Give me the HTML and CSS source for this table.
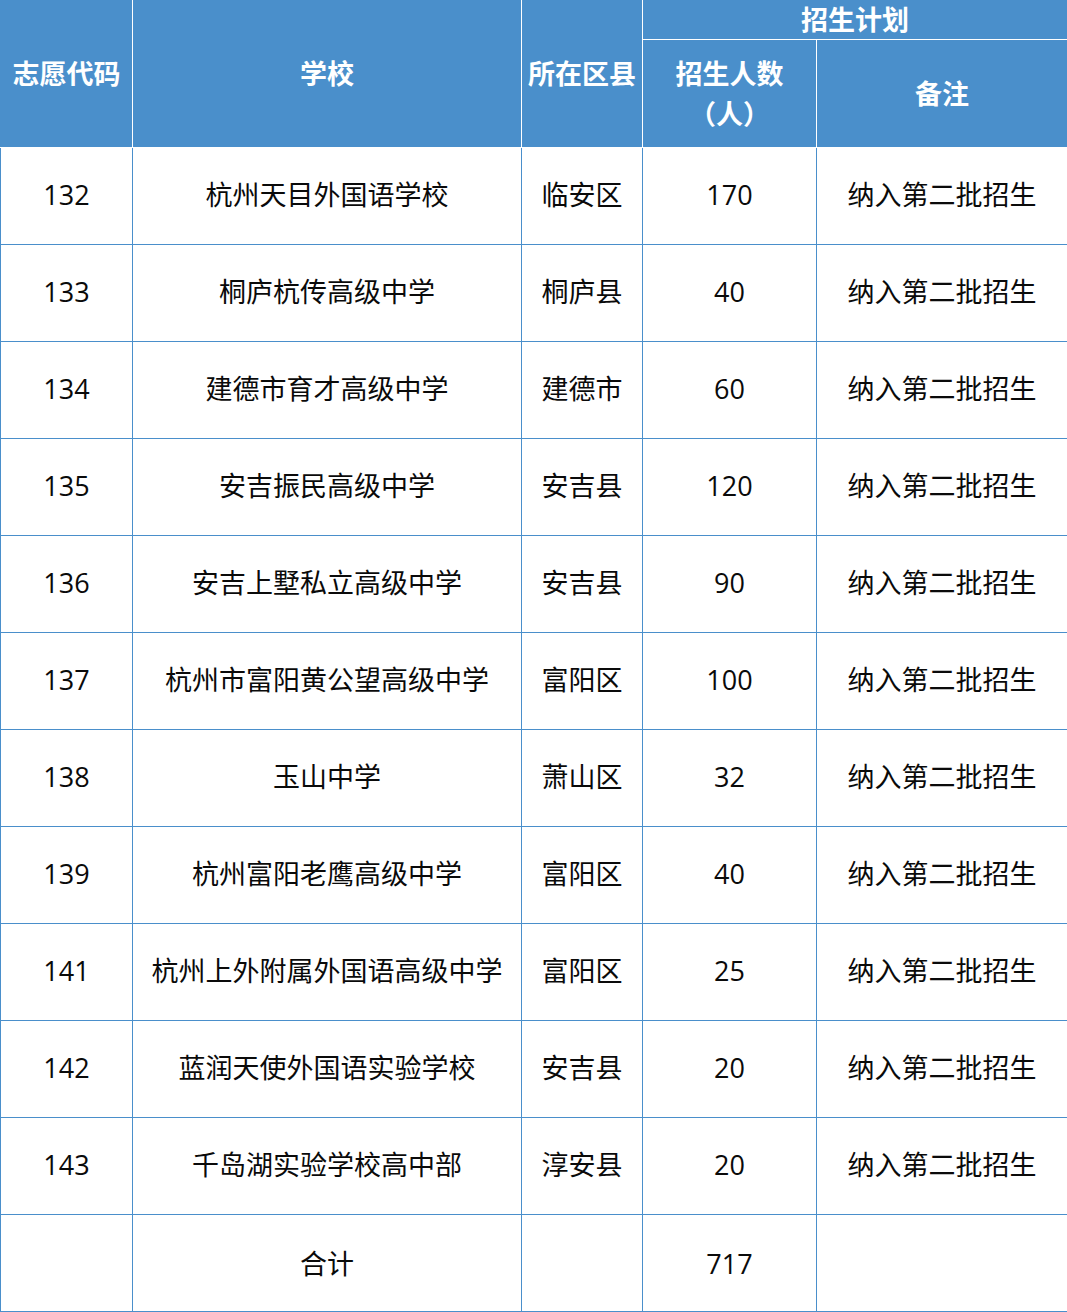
FILE: index.html
```html
<!DOCTYPE html>
<html lang="zh-CN">
<head>
<meta charset="utf-8">
<title>招生计划</title>
<link rel="stylesheet" href="styles.css">
</head>
<body>
<table class="plan">
  <colgroup>
    <col class="c1"><col class="c2"><col class="c3"><col class="c4"><col class="c5">
  </colgroup>
  <thead>
    <tr class="h1">
      <th rowspan="2">志愿代码</th>
      <th rowspan="2">学校</th>
      <th rowspan="2">所在区县</th>
      <th colspan="2" class="group">招生计划</th>
    </tr>
    <tr class="h2">
      <th class="two">招生人数<br>（人）</th>
      <th>备注</th>
    </tr>
  </thead>
  <tbody>
    <tr><td>132</td><td>杭州天目外国语学校</td><td>临安区</td><td>170</td><td>纳入第二批招生</td></tr>
    <tr><td>133</td><td>桐庐杭传高级中学</td><td>桐庐县</td><td>40</td><td>纳入第二批招生</td></tr>
    <tr><td>134</td><td>建德市育才高级中学</td><td>建德市</td><td>60</td><td>纳入第二批招生</td></tr>
    <tr><td>135</td><td>安吉振民高级中学</td><td>安吉县</td><td>120</td><td>纳入第二批招生</td></tr>
    <tr><td>136</td><td>安吉上墅私立高级中学</td><td>安吉县</td><td>90</td><td>纳入第二批招生</td></tr>
    <tr><td>137</td><td>杭州市富阳黄公望高级中学</td><td>富阳区</td><td>100</td><td>纳入第二批招生</td></tr>
    <tr><td>138</td><td>玉山中学</td><td>萧山区</td><td>32</td><td>纳入第二批招生</td></tr>
    <tr><td>139</td><td>杭州富阳老鹰高级中学</td><td>富阳区</td><td>40</td><td>纳入第二批招生</td></tr>
    <tr><td>141</td><td>杭州上外附属外国语高级中学</td><td>富阳区</td><td>25</td><td>纳入第二批招生</td></tr>
    <tr><td>142</td><td>蓝润天使外国语实验学校</td><td>安吉县</td><td>20</td><td>纳入第二批招生</td></tr>
    <tr><td>143</td><td>千岛湖实验学校高中部</td><td>淳安县</td><td>20</td><td>纳入第二批招生</td></tr>
    <tr class="total"><td></td><td>合计</td><td></td><td>717</td><td></td></tr>
  </tbody>
</table>
</body>
</html>
```
FILE: styles.css
```css
html, body {
  margin: 0;
  padding: 0;
  background: #ffffff;
}
.plan {
  width: 1067px;
  border-collapse: collapse;
  table-layout: fixed;
  font-family: "Open Sans", "Noto Sans CJK SC", sans-serif;
  font-size: 27px;
  color: #0a0a0a;
}
.c1 { width: 132px; }
.c2 { width: 389px; }
.c3 { width: 121px; }
.c4 { width: 174px; }
.c5 { width: 251px; }

.plan th {
  background: #4a8fcb;
  color: #ffffff;
  font-weight: 700;
  border: 1px solid #ffffff;
  padding: 0;
  text-align: center;
  vertical-align: middle;
  line-height: 38px;
}
.plan thead tr:first-child th:first-child { border-left-color: #4a8fcb; }
.plan thead th:last-child { border-right-color: #4a8fcb; }
.plan thead tr:first-child th { border-top-color: #4a8fcb; }
.h1 { height: 39px; }
.h2 { height: 108px; }
.plan th.group { height: 38px; line-height: 36px; }
.plan th.two { line-height: 40px; }

.plan td {
  border: 1px solid #4a8fcb;
  height: 94px;
  padding: 0 0 2px 0;
  text-align: center;
  vertical-align: middle;
  line-height: 30px;
  font-weight: 400;
}
.total td { padding: 2px 0 0 0; }
```
